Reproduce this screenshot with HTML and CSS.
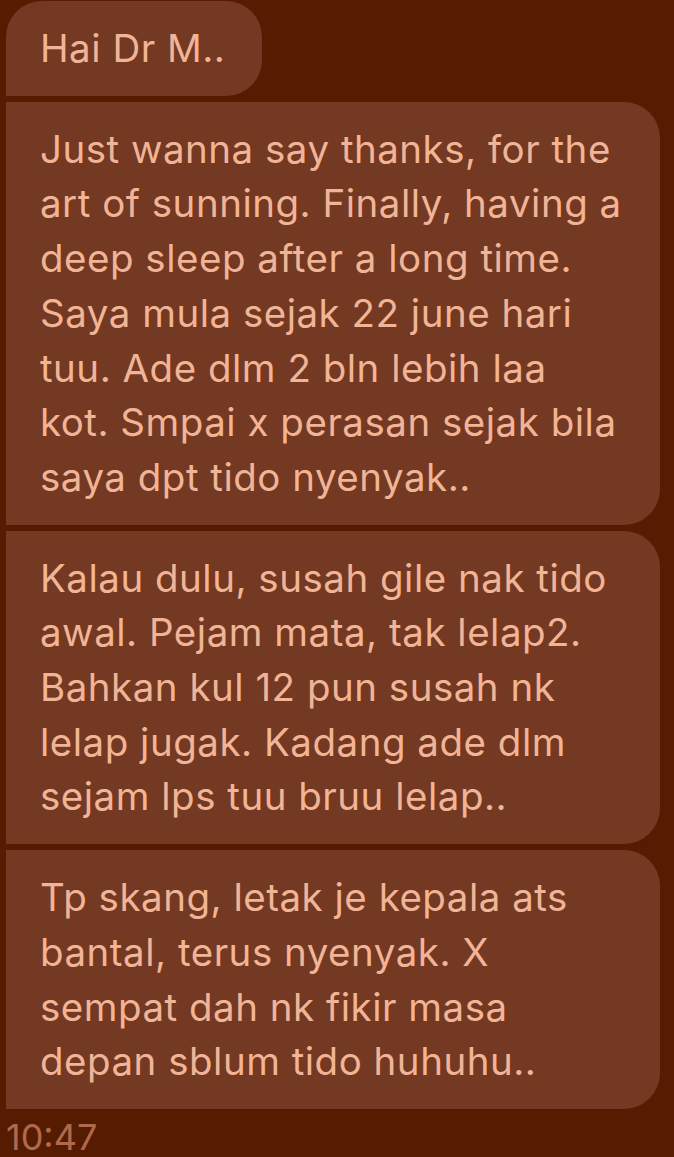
FILE: index.html
```html
<!DOCTYPE html>
<html lang="ms">
<head>
<meta charset="utf-8">
<title>DM</title>
<link rel="stylesheet" href="styles.css">
</head>
<body>
<main class="thread">
  <div class="bubble first">Hai Dr M..</div>
  <div class="bubble wide">Just wanna say thanks, for the<br>art of sunning. Finally, having a<br>deep sleep after a long time.<br>Saya mula sejak 22 june hari<br>tuu. Ade dlm 2 bln lebih laa<br>kot. Smpai x perasan sejak bila<br>saya dpt tido nyenyak..</div>
  <div class="bubble wide">Kalau dulu, susah gile nak tido<br>awal. Pejam mata, tak lelap2.<br>Bahkan kul 12 pun susah nk<br>lelap jugak. Kadang ade dlm<br>sejam lps tuu bruu lelap..</div>
  <div class="bubble wide">Tp skang, letak je kepala ats<br>bantal, terus nyenyak. X<br>sempat dah nk fikir masa<br>depan sblum tido huhuhu..</div>
  <div class="time">10:47</div>
</main>
</body>
</html>
```

FILE: styles.css
```css
html, body {
  margin: 0;
  padding: 0;
  background: #561c02;
}
body {
  font-family: Inter, Roboto, "Liberation Sans", sans-serif;
  color: #f1b496;
}
.thread {
  display: flex;
  flex-direction: column;
  align-items: flex-start;
  gap: 6px;
  padding: 1px 14px 0 6px;
}
.bubble {
  box-sizing: border-box;
  background: #733922;
  font-size: 38.5px;
  letter-spacing: 0.5px;
  line-height: 54.7px;
  padding: 20px 34px;
  border-radius: 0 36px 36px 0;
  white-space: nowrap;
}
.bubble.first {
  padding-right: 37px;
  border-radius: 36px 36px 36px 0;
}
.bubble.wide {
  width: 654px;
}
.time {
  margin-top: 4px;
  font-size: 36px;
  line-height: 36px;
  color: #b0694d;
}
```
